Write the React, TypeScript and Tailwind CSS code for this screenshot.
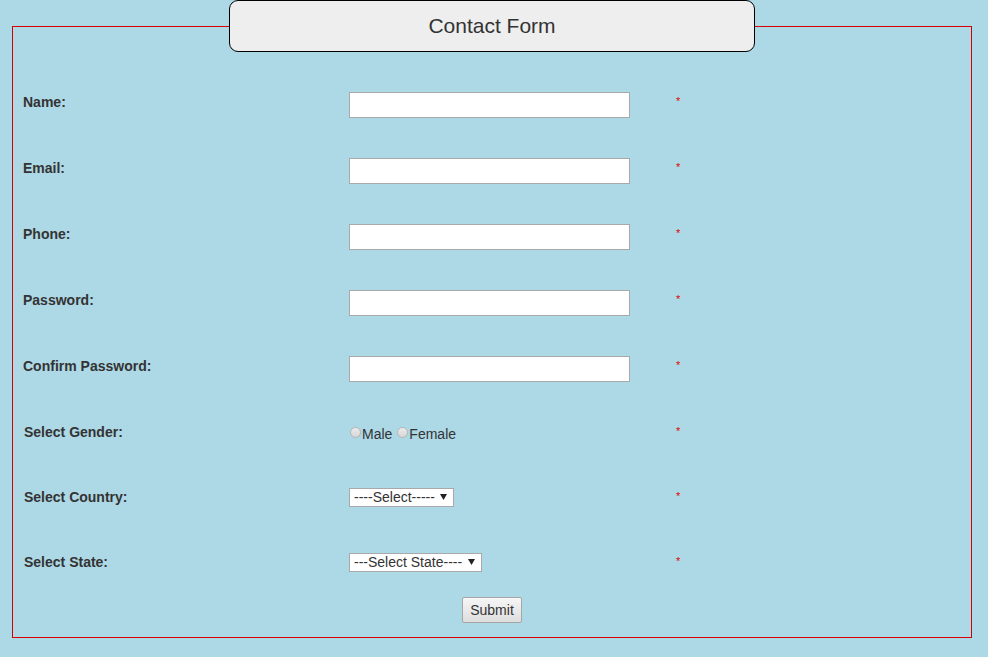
import React from "react";

const font = { fontFamily: '"Liberation Sans", Arial, Helvetica, sans-serif' };

function Star() {
  return (
    <div className="w-[20px] pt-[3px] text-[11px] leading-[12px] text-[#e00000]">*</div>
  );
}

function Label({ children, shift = false }: { children: React.ReactNode; shift?: boolean }) {
  return (
    <div
      className={
        shift
          ? "w-[326px] pl-[1px] pt-[2px] text-[14px] leading-[16px] font-bold text-[#333]"
          : "w-[326px] pt-[2px] text-[14px] leading-[16px] font-bold text-[#333]"
      }
    >
      {children}
    </div>
  );
}

function TextRow({ label, type = "text" }: { label: string; type?: string }) {
  return (
    <div className="flex h-[66px] items-start">
      <Label>{label}</Label>
      <div className="w-[327px]">
        <input
          type={type}
          className="block h-[26px] w-[281px] border border-[#a9a9a9] bg-white px-1 text-[14px] outline-none"
        />
      </div>
      <Star />
    </div>
  );
}

function Arrow() {
  return (
    <svg width="7" height="6" viewBox="0 0 7 6" className="pointer-events-none absolute right-[7px] top-[6px]">
      <path d="M0 0 H7 L3.5 6 Z" fill="#222" />
    </svg>
  );
}

function Select({ text, width }: { text: string; width: string }) {
  return (
    <div className={`relative h-[19px] ${width}`}>
      <select
        defaultValue=""
        className="block h-[19px] w-full appearance-none rounded-none border border-[#a9a9a9] bg-white pl-[4px] text-[14px] leading-[17px] text-[#333] outline-none"
      >
        <option value="">{text}</option>
      </select>
      <Arrow />
    </div>
  );
}

function Radio({ name }: { name: string }) {
  return (
    <input
      type="radio"
      name="gender"
      value={name}
      className="mx-[1px] mt-[5px] block h-[11px] w-[11px] appearance-none rounded-full border border-[#b5b5b5] bg-gradient-to-b from-[#ececec] to-[#d6d6d6] checked:from-[#5b9bd5] checked:to-[#2f6fb0]"
    />
  );
}

export default function App() {
  return (
    <div className="relative min-h-[657px] w-full bg-[#add8e6]" style={font}>
      <div className="ml-[12px] pt-[26px]">
        <div className="h-[612px] w-[960px] border-[1px] border-solid border-[#d40000]">
          <div className="pl-[10px] pt-[65px]">
            <TextRow label="Name:" />
            <TextRow label="Email:" />
            <TextRow label="Phone:" />
            <TextRow label="Password:" type="password" />
            <TextRow label="Confirm Password:" type="password" />
            <div className="flex h-[65px] items-start">
              <Label shift>Select Gender:</Label>
              <div className="flex w-[327px] items-start text-[14px] leading-[16px] text-[#333]">
                <Radio name="male" />
                <span className="mt-[4px]">Male</span>
                <span className="mt-[4px] w-[4px]" />
                <Radio name="female" />
                <span className="mt-[4px]">Female</span>
              </div>
              <Star />
            </div>
            <div className="flex h-[65px] items-start">
              <Label shift>Select Country:</Label>
              <div className="w-[327px] pt-[1px]">
                <Select text="----Select-----" width="w-[105px]" />
              </div>
              <Star />
            </div>
            <div className="flex h-[45px] items-start">
              <Label shift>Select State:</Label>
              <div className="w-[327px] pt-[1px]">
                <Select text="---Select State----" width="w-[133px]" />
              </div>
              <Star />
            </div>
          </div>
          <div className="flex justify-center">
            <button className="h-[26px] w-[60px] rounded-[2px] border border-[#a6a6a6] bg-gradient-to-b from-[#f6f6f6] to-[#dedede] text-[14px] text-[#333]">
              Submit
            </button>
          </div>
        </div>
      </div>
      <div className="absolute left-[229px] top-0 flex h-[52px] w-[526px] items-center justify-center rounded-[9px] border border-black bg-[#eeeeee]">
        <span className="text-[21px] text-[#333]">Contact Form</span>
      </div>
    </div>
  );
}
